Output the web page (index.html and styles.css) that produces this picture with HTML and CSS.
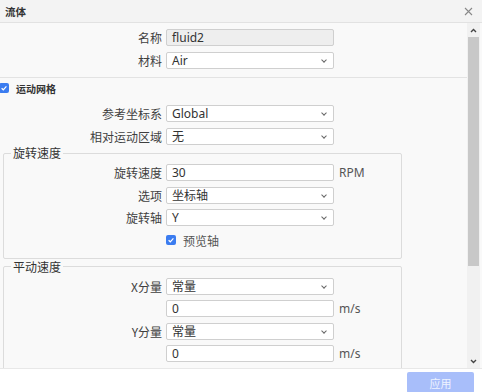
FILE: index.html
```html
<!doctype html>
<html lang="zh-cn">

<head>
  <meta charset="UTF-8" />
  <title>流体</title>
  <link rel="stylesheet" href="styles.css">
</head>

<body>
  <div class="dialog">
    <div class="dialog-head">
      <span class="dialog-title">流体</span>
      <svg class="close" width="9" height="9" viewBox="0 0 9 9">
        <path d="M1 1L8 8M8 1L1 8" stroke="#888" stroke-width="1.1" fill="none" />
      </svg>
    </div>

    <div class="dialog-body">
      <div class="scroll">
        <div class="section">
          <div class="row">
            <label>名称</label>
            <div class="field readonly">fluid2</div>
          </div>
          <div class="row">
            <label>材料</label>
            <div class="field select">Air</div>
          </div>
        </div>

        <div class="check-head">
          <span class="check"><svg width="8" height="8" viewBox="0 0 8 8"><path d="M1.6 4.2L3.3 5.8L6.4 2.4" stroke="#fff" stroke-width="1.2" fill="none" /></svg></span>
          <span>运动网格</span>
        </div>

        <div class="group">
          <div class="row">
            <label>参考坐标系</label>
            <div class="field select">Global</div>
          </div>
          <div class="row">
            <label>相对运动区域</label>
            <div class="field select">无</div>
          </div>
        </div>

        <fieldset>
          <legend>旋转速度</legend>
          <div class="row">
            <label>旋转速度</label>
            <div class="field">30</div>
            <span class="unit">RPM</span>
          </div>
          <div class="row">
            <label>选项</label>
            <div class="field select">坐标轴</div>
          </div>
          <div class="row">
            <label>旋转轴</label>
            <div class="field select">Y</div>
          </div>
          <div class="row">
            <label></label>
            <span class="check"><svg width="8" height="8" viewBox="0 0 8 8"><path d="M1.6 4.2L3.3 5.8L6.4 2.4" stroke="#fff" stroke-width="1.2" fill="none" /></svg></span>
            <span class="check-text">预览轴</span>
          </div>
        </fieldset>

        <fieldset>
          <legend>平动速度</legend>
          <div class="row">
            <label>X分量</label>
            <div class="field select">常量</div>
          </div>
          <div class="row">
            <label></label>
            <div class="field">0</div>
            <span class="unit">m/s</span>
          </div>
          <div class="row">
            <label>Y分量</label>
            <div class="field select">常量</div>
          </div>
          <div class="row">
            <label></label>
            <div class="field">0</div>
            <span class="unit">m/s</span>
          </div>
          <div class="row">
            <label></label>
            <div class="field select"></div>
          </div>
        </fieldset>
      </div>

      <div class="scrollbar">
        <svg class="arrow" width="7" height="5" viewBox="0 0 7 5"><path d="M1 4L3.5 1.5L6 4" stroke="#444" stroke-width="1.4" fill="none" /></svg>
        <div class="thumb"></div>
        <div class="track"></div>
        <svg class="arrow" width="7" height="5" viewBox="0 0 7 5"><path d="M1 1L3.5 3.5L6 1" stroke="#444" stroke-width="1.4" fill="none" /></svg>
      </div>
    </div>

    <div class="dialog-foot">
      <button type="button">应用</button>
    </div>
  </div>
</body>

</html>
```

FILE: styles.css
```css
body {
  margin: 0;
  font-family: "Noto Sans", "Noto Sans CJK SC", sans-serif;
  font-size: 12px;
  color: #444;
  background: #fff;
}

.dialog {
  width: 482px;
  height: 392px;
  display: flex;
  flex-direction: column;
  overflow: hidden;
}

.dialog-head {
  height: 22px;
  flex: none;
  display: flex;
  align-items: center;
  justify-content: space-between;
  padding: 0 9px 0 5px;
  background: #f3f3f3;
  border-bottom: 1px solid #e2e2e2;
}

.dialog-title {
  font-family: "Noto Sans CJK SC", sans-serif;
  font-size: 10.5px;
  font-weight: bold;
  color: #333;
}

.dialog-body {
  flex: 1;
  display: flex;
  min-height: 0;
  background: #f9f9f9;
}

.scroll {
  flex: 1;
  overflow: hidden;
}

.section {
  display: flex;
  flex-direction: column;
  gap: 5.5px;
  padding: 6px 0 8.5px;
  border-bottom: 1px solid #e3e3e3;
}

.group {
  display: flex;
  flex-direction: column;
  gap: 5.5px;
}

.row {
  display: flex;
  align-items: center;
  gap: 4px;
  height: 17px;
}

.row label {
  width: 162px;
  flex: none;
  text-align: right;
  font-family: "Noto Sans CJK SC", sans-serif;
  white-space: nowrap;
  color: #3f3f3f;
}

fieldset .row label {
  width: 158px;
}

.field {
  width: 168px;
  height: 17px;
  box-sizing: border-box;
  flex: none;
  border: 1px solid #cfcfcf;
  border-radius: 2px;
  background: #fff;
  padding: 0 5px;
  line-height: 15px;
  color: #333;
  font-family: "Noto Sans", "Noto Sans CJK SC", sans-serif;
  position: relative;
}

.readonly {
  background: #eeeeee;
}

.select::after {
  content: "";
  position: absolute;
  right: 7px;
  top: 5px;
  width: 3px;
  height: 3px;
  border-right: 1px solid #666;
  border-bottom: 1px solid #666;
  transform: rotate(45deg);
}

.unit {
  margin-left: 1px;
  color: #555;
}

.check-head {
  display: flex;
  align-items: center;
  gap: 7px;
  height: 12px;
  margin: 4px 0 11px -1px;
  font-family: "Noto Sans CJK SC", sans-serif;
  font-size: 10px;
  font-weight: bold;
  color: #333;
}

.check {
  width: 10px;
  height: 10px;
  flex: none;
  display: flex;
  align-items: center;
  justify-content: center;
  background: #3b7cf0;
  border-radius: 2px;
}

.check-text {
  margin-left: 3px;
  font-family: "Noto Sans CJK SC", sans-serif;
  color: #555;
}

fieldset {
  width: 399px;
  box-sizing: border-box;
  margin: 1.5px 0 0 3px;
  padding: 4px 0 9px;
  border: 1px solid #dcdcdc;
  border-radius: 2px;
  display: flex;
  flex-direction: column;
  gap: 5.5px;
}

fieldset + fieldset {
  margin-top: 1px;
}

legend {
  margin-left: 7px;
  padding: 0 2px;
  line-height: 14px;
  font-family: "Noto Sans CJK SC", sans-serif;
  color: #333;
}

.scrollbar {
  width: 13px;
  flex: none;
  margin-right: 2px;
  display: flex;
  flex-direction: column;
  align-items: center;
  background: #f1f1f1;
}

.arrow {
  flex: none;
  margin: 5px 0 4px;
}

.thumb {
  width: 11px;
  height: 229px;
  flex: none;
  background: #c8c8c8;
}

.track {
  flex: 1;
}

.dialog-foot {
  height: 24px;
  flex: none;
  display: flex;
  justify-content: flex-end;
  align-items: flex-end;
  padding-right: 8px;
  background: #fff;
  border-top: 1px solid #e8e8e8;
  box-sizing: border-box;
}

button {
  width: 67px;
  height: 21px;
  margin-bottom: -1px;
  border: none;
  border-radius: 2px;
  background: #a8befa;
  color: #eef3ff;
  font-family: "Noto Sans CJK SC", sans-serif;
  font-size: 11px;
}
```
